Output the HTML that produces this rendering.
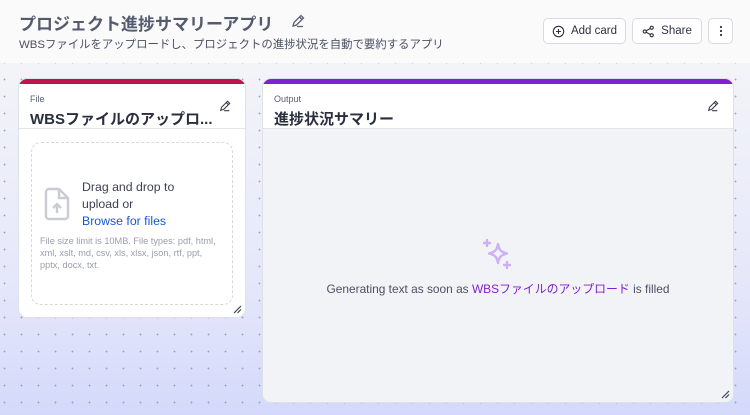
<!DOCTYPE html>
<html><head><meta charset="utf-8"><style>
*{box-sizing:border-box;margin:0;padding:0}
body{width:750px;height:415px;overflow:hidden;font-family:"Liberation Sans","Noto Sans CJK JP",sans-serif;position:relative;background:#fafafb}
.hdr{position:absolute;left:0;top:0;width:750px;height:63px;background:#fafafb}
.canvas{position:absolute;left:0;top:63px;width:750px;height:352px;background:linear-gradient(#f3f4f8,#e6e8fa 60%,#d4d9fb);}
.dots{position:absolute;inset:0;background-image:radial-gradient(circle,#8a8fa8 0.7px,transparent 1.1px);background-size:17px 17px;background-position:-4px 8px;opacity:.8}
h1{position:absolute;left:19px;top:10px;font-size:17px;font-weight:bold;color:#555b6e}
.sub{position:absolute;left:19px;top:36px;font-size:11.4px;color:#4b5163}
.btn{position:absolute;top:18px;height:26px;border:1px solid #d8dae0;border-radius:5px;background:#fff;font-size:11.5px;color:#2d3142;display:flex;align-items:center;justify-content:center;gap:6px}
.card{position:absolute;background:#fff;border-radius:8px;overflow:hidden;box-shadow:0 0 0 1px #dfe1ea}
.card .top{height:5px}
.card .head{height:45px;border-bottom:1px solid #e2e4ea;position:relative}
.lbl{position:absolute;left:11px;top:10px;font-size:9px;color:#5a6070}
.ttl{position:absolute;left:11px;top:24px;font-size:15px;font-weight:bold;color:#2a2f3d}
.pen{position:absolute;right:14px;top:16px}
</style></head><body>
<div class="hdr"></div>
<div class="canvas"><div class="dots"></div></div>
<h1>プロジェクト進捗サマリーアプリ</h1>
<svg style="position:absolute;left:291px;top:14px" width="14" height="14" viewBox="0 0 14 14" fill="none" stroke="#5a6070" stroke-width="1.3"><path d="M2 12l1-3.5 7-7 2.5 2.5-7 7z M8.5 3l2.5 2.5 M6 12.5h6"/></svg>
<div class="sub">WBSファイルをアップロードし、プロジェクトの進捗状況を自動で要約するアプリ</div>
<div class="btn" style="left:543px;width:83px"><svg width="13" height="13" viewBox="0 0 14 14" fill="none" stroke="#2d3142" stroke-width="1.2"><circle cx="7" cy="7" r="5.6"/><path d="M7 4.3v5.4M4.3 7h5.4"/></svg>Add card</div>
<div class="btn" style="left:632px;width:70px"><svg width="13" height="13" viewBox="0 0 14 14" fill="none" stroke="#2d3142" stroke-width="1.2"><circle cx="3" cy="7" r="1.7"/><circle cx="10.5" cy="3" r="1.7"/><circle cx="10.5" cy="11" r="1.7"/><path d="M4.5 6.2l4.5-2.4M4.5 7.8l4.5 2.4"/></svg>Share</div>
<div class="btn" style="left:708px;width:25px"><svg width="4" height="12" viewBox="0 0 4 12" fill="#2d3142"><circle cx="2" cy="2" r="1.1"/><circle cx="2" cy="6" r="1.1"/><circle cx="2" cy="10" r="1.1"/></svg></div>

<div class="card" style="left:19px;top:79px;width:226px;height:238px">
<div class="top" style="background:#c0144f"></div>
<div class="head"><div class="lbl">File</div><div class="ttl">WBSファイルのアップロ...</div>
<svg class="pen" width="12" height="12" viewBox="0 0 14 14" fill="none" stroke="#3a3f4d" stroke-width="1.3"><path d="M2 12l1-3.5 7-7 2.5 2.5-7 7z M8.5 3l2.5 2.5 M6 12.5h6"/></svg></div>
<div style="position:absolute;left:12px;top:63px;width:202px;height:163px;border:1.3px dashed #d6d8de;border-radius:10px"></div>
<svg style="position:absolute;left:24px;top:108px" width="28" height="34" viewBox="0 0 28 34" fill="none" stroke="#c9ccd3" stroke-width="2.4" stroke-linejoin="round"><path d="M3 5a3 3 0 0 1 3-3h10l9 9v18a3 3 0 0 1-3 3H6a3 3 0 0 1-3-3z M16 2v9h9"/><path d="M14 26v-9M10 21l4-4 4 4"/></svg>
<div style="position:absolute;left:63px;top:100px;font-size:12.3px;line-height:17px;color:#3d4252">Drag and drop to<br>upload or<br><span style="color:#1558d6">Browse for files</span></div>
<div style="position:absolute;left:21px;top:156px;width:180px;font-size:9.2px;line-height:12px;color:#9a9ea9">File size limit is 10MB. File types: pdf, html, xml, xslt, md, csv, xls, xlsx, json, rtf, ppt, pptx, docx, txt.</div>
<svg style="position:absolute;right:3px;bottom:3px" width="9" height="9" viewBox="0 0 9 9" stroke="#3d4252" stroke-width="1.2"><path d="M1 8L8 1M4.5 8L8 4.5"/></svg>
</div>

<div class="card" style="left:263px;top:79px;width:470px;height:323px;background:#f2f3f7">
<div class="top" style="background:#7e22ce"></div>
<div class="head" style="background:#fff"><div class="lbl">Output</div><div class="ttl">進捗状況サマリー</div>
<svg class="pen" width="12" height="12" viewBox="0 0 14 14" fill="none" stroke="#3a3f4d" stroke-width="1.3"><path d="M2 12l1-3.5 7-7 2.5 2.5-7 7z M8.5 3l2.5 2.5 M6 12.5h6"/></svg></div>
<svg style="position:absolute;left:218px;top:158px" width="34" height="34" viewBox="0 0 34 34" fill="none" stroke="#cdb0f5" stroke-width="2.4" stroke-linejoin="round" stroke-linecap="round"><path d="M17 7c1 6 3 8 9 9.5-6 1.5-8 3.5-9 9.5-1-6-3-8-9-9.5 6-1.5 8-3.5 9-9.5z"/><path d="M6 3v6M3 6h6M26 25v6M23 28h6"/></svg>
<div style="position:absolute;left:0;width:470px;top:201px;text-align:center;font-size:11.9px;color:#4b5163">Generating text as soon as <span style="color:#7e22ce">WBSファイルのアップロード</span> is filled</div>
<svg style="position:absolute;right:3px;bottom:3px" width="9" height="9" viewBox="0 0 9 9" stroke="#3d4252" stroke-width="1.2"><path d="M1 8L8 1M4.5 8L8 4.5"/></svg>
</div>
</body></html>
